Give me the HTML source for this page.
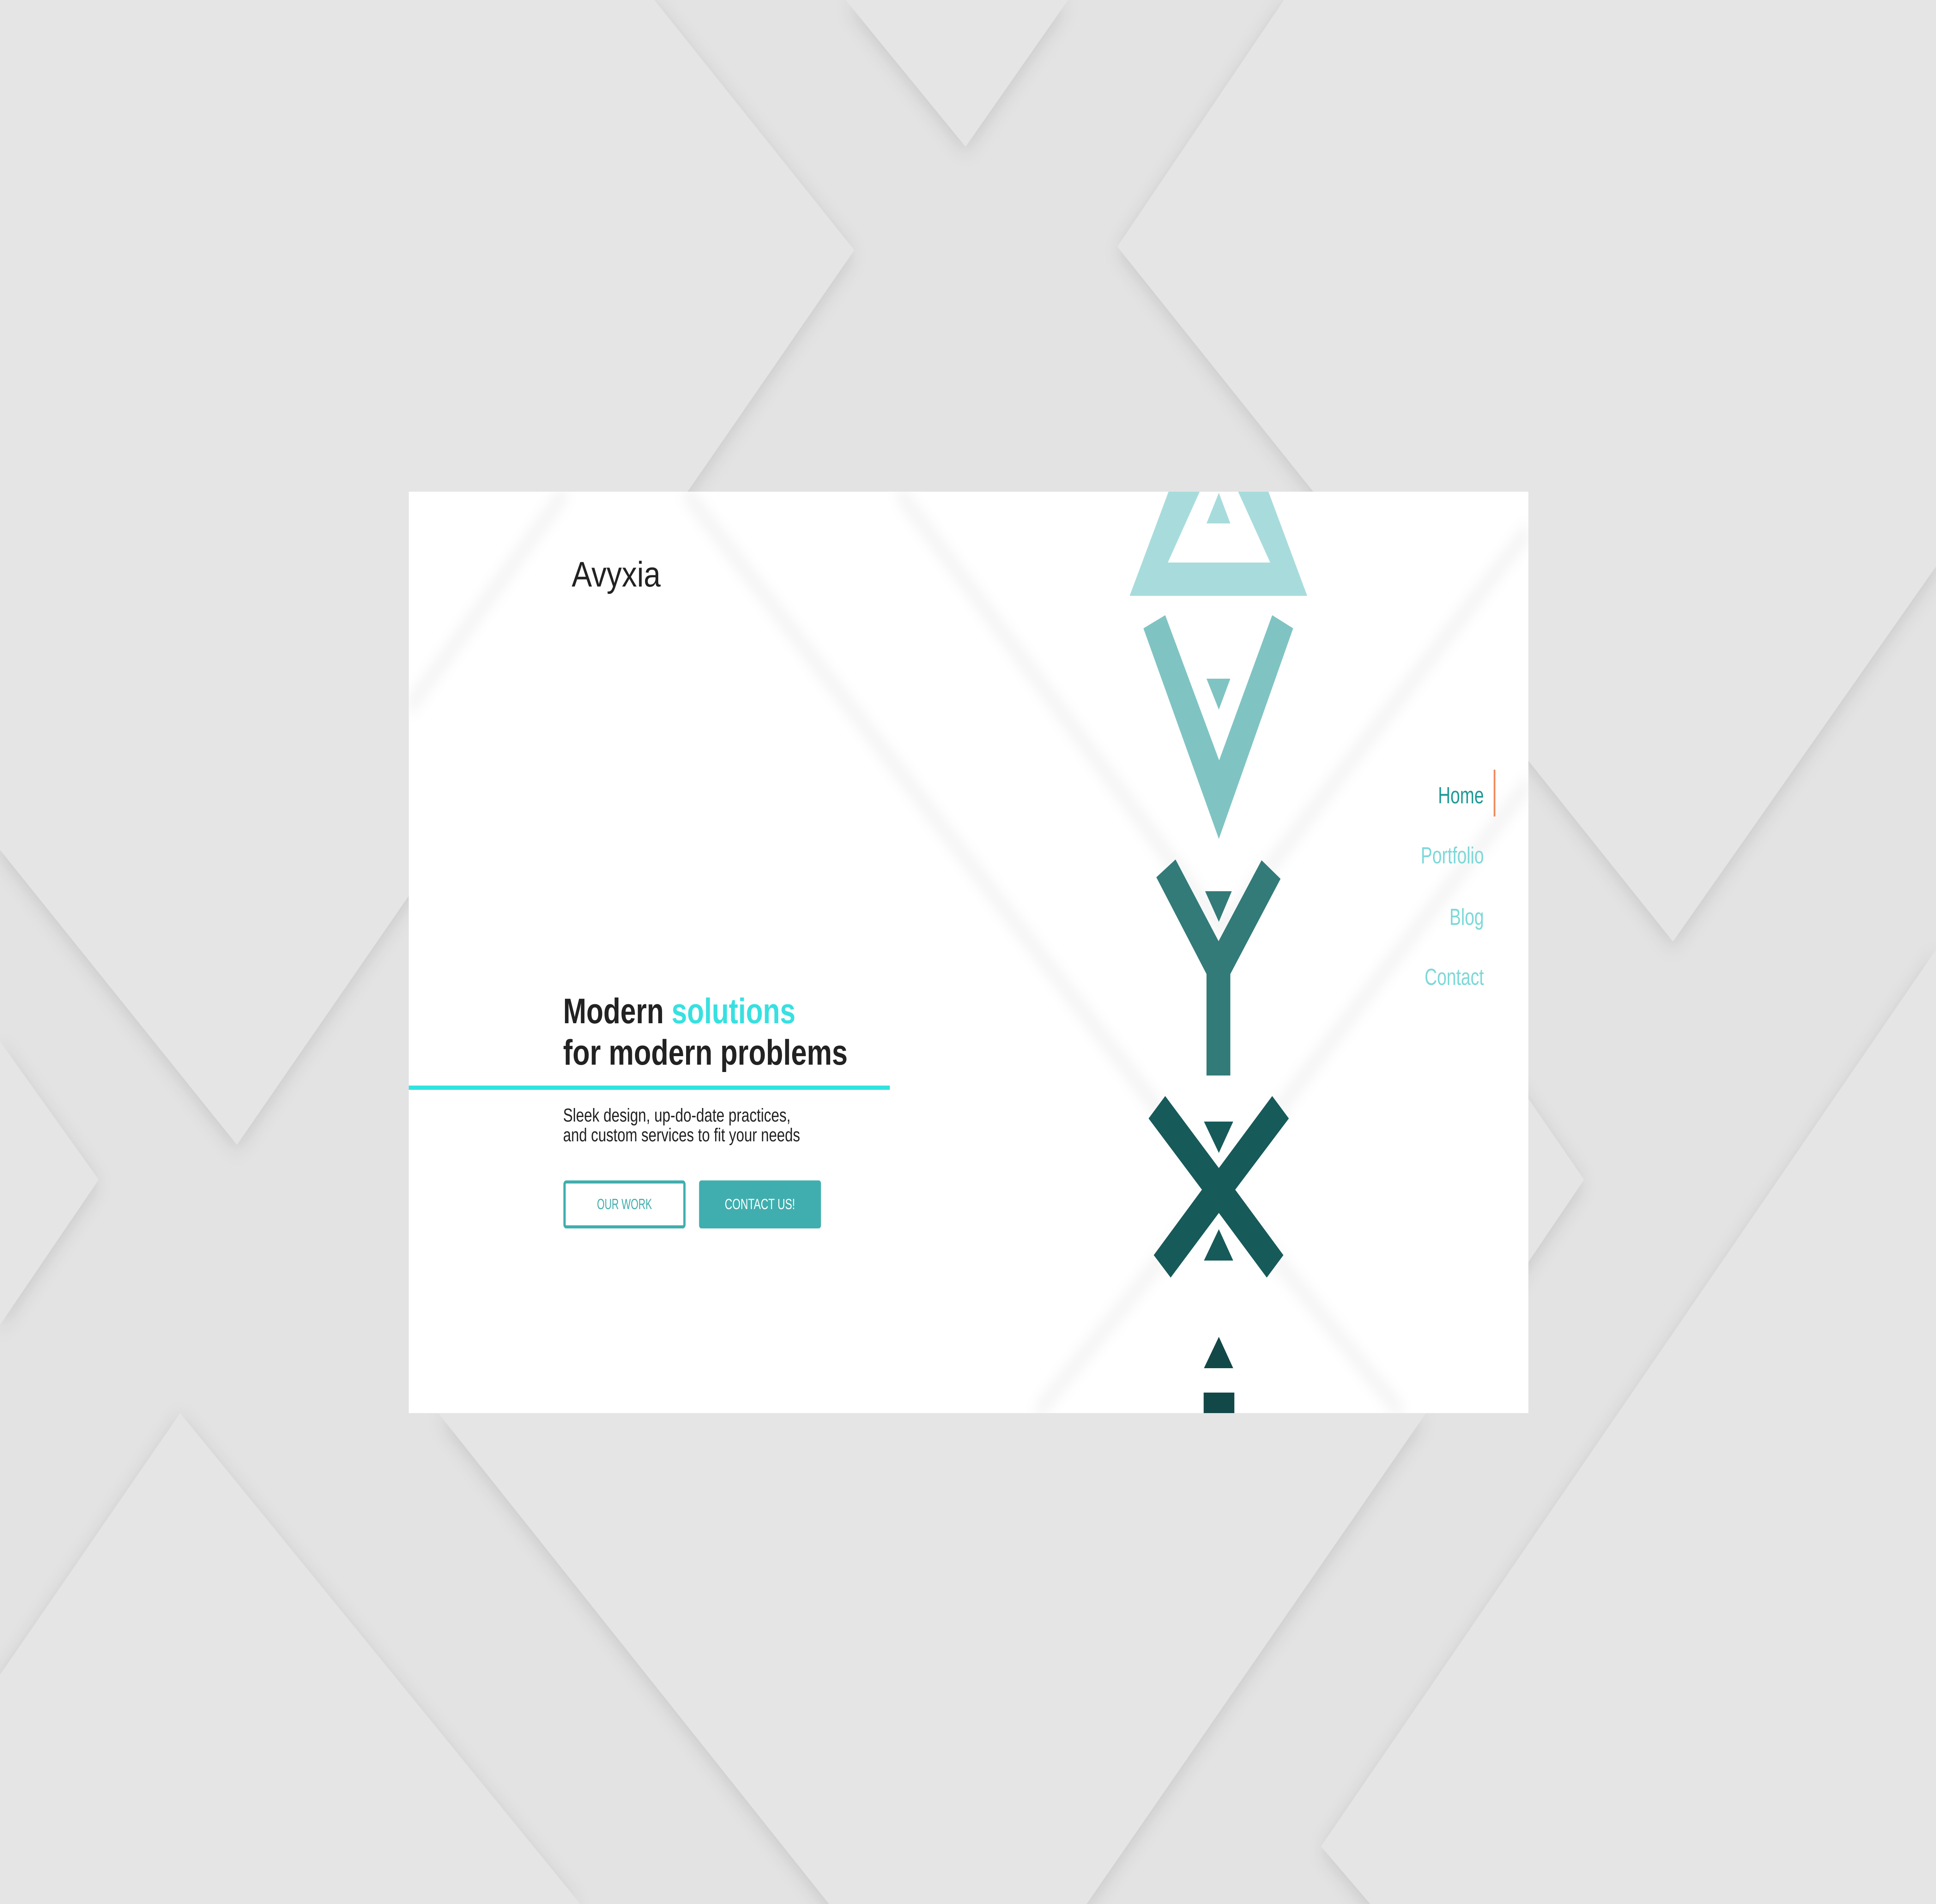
<!DOCTYPE html>
<html><head><meta charset="utf-8"><style>
html,body{margin:0;padding:0;background:#e4e4e4;width:100%;height:100%;overflow:hidden;}
svg{display:block;position:absolute;left:0;top:0;width:100vw;height:100vh}
</style></head><body>
<svg viewBox="0 0 6749 4918" preserveAspectRatio="none" xmlns="http://www.w3.org/2000/svg">
<defs>
<filter id="ds" x="-20%" y="-20%" width="140%" height="140%"><feDropShadow dx="0" dy="12" stdDeviation="28" flood-color="#000" flood-opacity="0.12"/></filter>
<filter id="bl"><feGaussianBlur stdDeviation="22"/></filter>
<clipPath id="card"><rect x="1425" y="1270" width="3903" height="2380"/></clipPath>
</defs>
<rect width="6749" height="4918" fill="#e3e3e3"/>
<g fill="#e5e5e5" filter="url(#ds)">
<polygon points="2281,0 2978,646 826,2957 0,2195 0,0"/>
<polygon points="2948,0 3366,379 3723,0"/>
<polygon points="4476,0 3895,637 5832,2432 6749,1463 6749,0"/>
<polygon points="0,2690 344,3047 0,3422"/>
<polygon points="0,4326 628,3650 2023,4918 0,4918"/>
<polygon points="6749,2453 4605,4769 4777,4918 6749,4918"/>
<polygon points="5200,2700 5522,3047 5200,3400"/>
<polygon points="1528,3650 2890,4918 3788,4918 4971,3650"/>
</g>
<rect x="1425" y="1270" width="3903" height="2380" fill="#fff"/>
<g clip-path="url(#card)" fill="none" stroke="#000" stroke-opacity="0.07" stroke-width="26" filter="url(#bl)">
<polyline points="2389,1270 4248,3069 4885,3650"/>
<polyline points="3133,1270 4248,2389"/>
<polyline points="5328,1369 4248,2410"/>
<polyline points="5328,2023 4248,3069 3615,3650"/>
<polyline points="1971,1270 1425,1829"/>
</g>
<g clip-path="url(#card)">
<path fill="#a8dcdc" fill-rule="evenodd" d="M4248,924 L4557,1539 L3938,1539 Z M4249,1160 L4071,1453 L4428,1453 Z"/>
<polygon fill="#a8dcdc" points="4249,1273 4289,1352 4206,1352"/>
<polygon fill="#7fc4c3" points="3986,1623 4062,1589 4250,1964 4435,1589 4508,1623 4249,2167"/>
<polygon fill="#7fc4c3" points="4206,1753 4289,1753 4249,1833"/>
<polygon fill="#327b79" points="4031,2266 4098,2220 4248,2431 4398,2222 4464,2270 4289,2516 4289,2778 4206,2778 4206,2516"/>
<polygon fill="#327b79" points="4201,2302 4294,2302 4249,2381"/>
<polygon fill="#175a5a" points="4004,2889 4062,2831 4249,3017 4435,2831 4493,2889 4306,3073 4474,3242 4416,3300 4249,3133 4081,3300 4022,3242 4190,3073"/>
<polygon fill="#175a5a" points="4197,2897 4299,2897 4249,2978"/>
<polygon fill="#175a5a" points="4197,3256 4299,3256 4249,3175"/>
<polygon fill="#124848" points="4249,3453 4299,3534 4197,3534"/>
<rect fill="#124848" x="4196" y="3597" width="107" height="53"/>
</g>
<g font-family="'Liberation Sans', 'DejaVu Sans', sans-serif">
<text x="1993" y="1515" font-size="92" fill="#222" textLength="310" lengthAdjust="spacingAndGlyphs">Avyxia</text>
<text x="1963" y="2643" font-size="92" font-weight="bold" fill="#222" textLength="810" lengthAdjust="spacingAndGlyphs">Modern <tspan fill="#38e0e0">solutions</tspan></text>
<text x="1963" y="2750" font-size="92" font-weight="bold" fill="#222" textLength="992" lengthAdjust="spacingAndGlyphs">for modern problems</text>
<rect x="1425" y="2804" width="1677" height="11" fill="#31e3e0"/>
<text x="1963" y="2897" font-size="48" fill="#222" textLength="793" lengthAdjust="spacingAndGlyphs">Sleek design, up-do-date practices,</text>
<text x="1963" y="2948" font-size="48" fill="#222" textLength="826" lengthAdjust="spacingAndGlyphs">and custom services to fit your needs</text>
<rect x="1968" y="3053" width="418" height="116" rx="6" fill="#fff" stroke="#40aeae" stroke-width="8"/>
<text x="2177" y="3123" font-size="38" fill="#40aeae" text-anchor="middle" textLength="192" lengthAdjust="spacingAndGlyphs">OUR WORK</text>
<rect x="2437" y="3049" width="425" height="124" rx="8" fill="#40aeae"/>
<text x="2649" y="3123" font-size="38" fill="#fff" text-anchor="middle" textLength="245" lengthAdjust="spacingAndGlyphs">CONTACT US!</text>
<text x="5173" y="2075" font-size="60" fill="#1e9a96" text-anchor="end">Home</text>
<text x="5173" y="2230" font-size="60" fill="#7dd8d8" text-anchor="end">Portfolio</text>
<text x="5173" y="2389" font-size="60" fill="#7dd8d8" text-anchor="end">Blog</text>
<text x="5173" y="2544" font-size="60" fill="#7dd8d8" text-anchor="end">Contact</text>
<rect x="5207" y="1988" width="6" height="121" fill="#f08a5d"/>
</g>
</svg>
</body></html>
